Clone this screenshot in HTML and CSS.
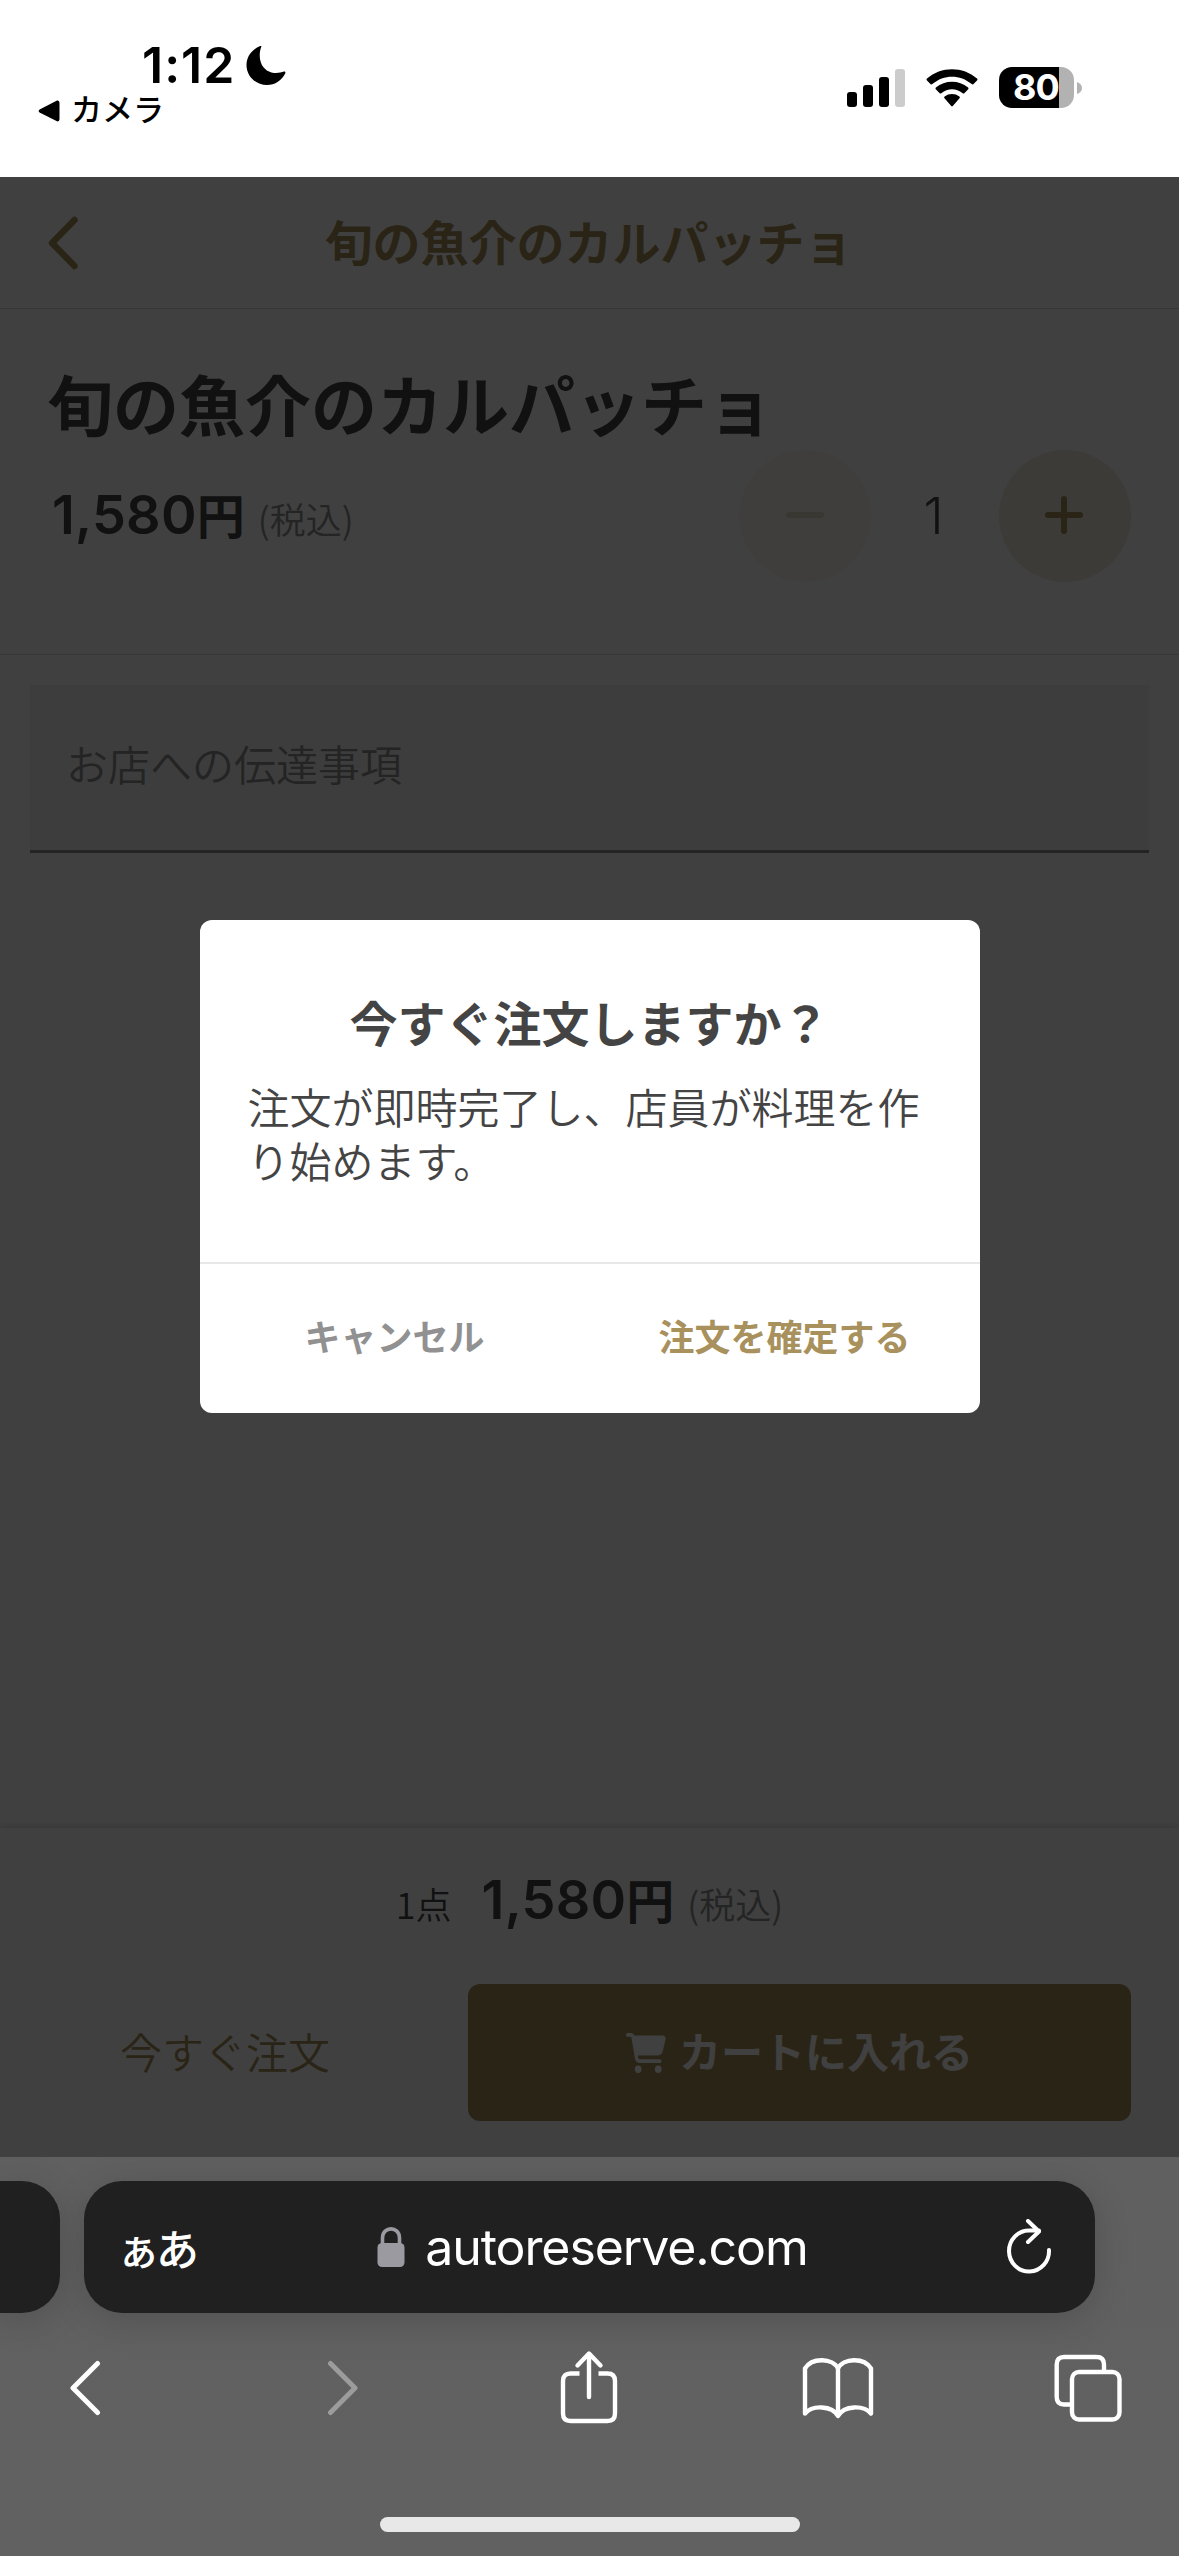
FILE: index.html
```html
<!DOCTYPE html>
<html lang="ja">
<head>
<meta charset="utf-8">
<title>旬の魚介のカルパッチョ</title>
<link rel="stylesheet" href="styles.css">
</head>
<body>
<header class="status">
  <div class="status-left">
    <div class="clock"><span>1:12</span>
      <svg class="moon" width="40" height="40" viewBox="0 0 40 40"><path d="M15.3 .8C13.600 5 13.400 10 14.200 14 15.500 21 21 26.300 28 26.900 32 27.200 35.500 26.500 38 25.600 39 25.300 39.700 26 39.300 27.200 36 34.300 29 39 21 39 9.500 39 .5 30.200 .5 19 .5 10.500 6 3.500 13.600 .3 14.800 -.2 15.700 .100 15.300 .8Z"/></svg>
    </div>
    <div class="back-app">
      <svg width="22" height="22" viewBox="0 0 22 22"><path d="M19 .6Q21.500 0 21.500 3V19Q21.500 22 19 21.300L1.600 12.600Q-.4 11 1.600 9.400Z"/></svg>
      <span>カメラ</span>
    </div>
  </div>
  <div class="status-right">
    <svg width="58" height="38" viewBox="0 0 58 38"><rect x="0" y="23" width="10" height="15" rx="3"/><rect x="16" y="16" width="10" height="22" rx="3"/><rect x="32" y="8" width="10" height="30" rx="3"/><rect x="48" y="0" width="10" height="38" rx="3" fill="#ccc"/></svg>
    <svg width="52" height="38" viewBox="0 0 52 38"><path d="M1 11.500Q0 10.500 1 9.500C15-3 37-3 51 9.500Q52 10.500 51 11.500L47.300 15.200Q46.600 15.900 45.700 15.100C34 5.300 18 5.300 6.300 15.100Q5.400 15.900 4.700 15.200Z"/><path d="M9.800 20.300Q9 19.400 9.900 18.600C19 10.800 33 10.800 42.100 18.600Q43 19.400 42.200 20.300L38.300 24.200Q37.500 24.900 36.700 24.200C30 19 22 19 15.300 24.200Q14.500 24.900 13.700 24.200Z"/><path d="M18.500 29.200Q17.600 28.300 18.600 27.500C23 24.200 29 24.200 33.400 27.500Q34.400 28.300 33.500 29.200L27 36.700Q26 37.700 25 36.700Z"/></svg>
    <div class="battery"><div class="cell"><span>80</span></div><svg width="5" height="12" viewBox="0 0 5 12"><path d="M0 0Q5 2 5 6T0 12Z" fill="#b2b2b2"/></svg></div>
  </div>
</header>

<main class="page">
  <nav class="nav">
    <svg width="30" height="54" viewBox="0 0 30 54"><path d="M26.500 4 4 27 26.500 50" fill="none" stroke="#a8915d" stroke-width="6.500" stroke-linecap="round" stroke-linejoin="round"/></svg>
    <h1>旬の魚介のカルパッチョ</h1>
  </nav>
  <section class="item">
    <h2>旬の魚介のカルパッチョ</h2>
    <div class="item-row">
      <div class="price"><span class="num">1,580</span><span class="yen">円</span><span class="tax">(税込)</span></div>
      <div class="stepper">
        <div class="round off"><svg width="40" height="40" viewBox="0 0 40 40"><path d="M4 19H36" stroke="#dfdac6" stroke-width="6" stroke-linecap="round"/></svg></div>
        <div class="count">1</div>
        <div class="round"><svg width="40" height="40" viewBox="0 0 40 40"><path d="M3 19H35M19 3V35" stroke="#a8915d" stroke-width="6" stroke-linecap="round"/></svg></div>
      </div>
    </div>
  </section>
  <div class="note">お店への伝達事項</div>
  <footer class="order">
    <div class="total"><span class="one">1</span><span class="ten">点</span><span class="num">1,580</span><span class="yen">円</span><span class="tax">(税込)</span></div>
    <div class="actions">
      <div class="now">今すぐ注文</div>
      <div class="cart">
        <svg width="40" height="40" viewBox="0 0 576 512" preserveAspectRatio="none"><path fill="#fff" d="M0 24C0 10.700 10.700 0 24 0H69.500c22 0 41.500 12.800 50.600 32h411c26.300 0 45.500 25 38.600 50.400l-41 152.300c-8.500 31.400-37 53.300-69.500 53.300H170.700l5.400 28.500c2.200 11.300 12.100 19.500 23.600 19.500H488c13.300 0 24 10.700 24 24s-10.700 24-24 24H199.700c-34.600 0-64.300-24.600-70.700-58.500L77.400 54.500c-.7-3.800-4-6.500-7.900-6.500H24C10.700 48 0 37.300 0 24zM128 464a48 48 0 1 1 96 0 48 48 0 1 1-96 0zm336-48a48 48 0 1 1 0 96 48 48 0 1 1 0-96z"/></svg>
        <span>カートに入れる</span>
      </div>
    </div>
  </footer>
  <div class="overlay">
    <div class="dialog">
      <div class="dialog-body">
        <h3>今すぐ注文しますか？</h3>
        <p>注文が即時完了し、店員が料理を作り始めます。</p>
      </div>
      <div class="dialog-actions"><div class="cancel">キャンセル</div><div class="confirm">注文を確定する</div></div>
    </div>
  </div>
</main>

<footer class="browser">
  <div class="tabs-row">
    <div class="prev-tab"></div>
    <div class="address">
      <div class="kana">ぁあ</div>
      <div class="url">
        <svg width="28" height="40" viewBox="0 0 28 40"><rect x=".5" y="16" width="27" height="24" rx="4.500" fill="#9b9aa1"/><path d="M5.500 18V11C5.500 -1.200 22.500 -1.200 22.500 11V18" fill="none" stroke="#9b9aa1" stroke-width="3.600"/></svg>
        <span>autoreserve.com</span>
      </div>
      <svg width="46" height="56" viewBox="0 0 46 56"><path d="M43 31A20 20.500 0 1 1 23 11.500 H33M22 2 33 12.500 22 23" fill="none" stroke="#fff" stroke-width="4" stroke-linecap="round" stroke-linejoin="round"/></svg>
    </div>
  </div>
  <div class="tools">
    <div class="tool"><svg width="32" height="56" viewBox="0 0 32 56"><path d="M28.500 3.500 4 28 28.500 52.500" fill="none" stroke="#fff" stroke-width="5" stroke-linecap="round" stroke-linejoin="round"/></svg></div>
    <div class="tool forward"><svg width="32" height="56" viewBox="0 0 32 56"><path d="M3.500 3.500 28 28 3.500 52.500" fill="none" stroke="#9c9c9c" stroke-width="5" stroke-linecap="round" stroke-linejoin="round"/></svg></div>
    <div class="tool share"><svg width="58" height="74" viewBox="0 0 58 74"><g fill="none" stroke="#fff" stroke-width="4.400" stroke-linecap="round" stroke-linejoin="round"><path stroke-linecap="butt" d="M19.500 23.500H10.500Q3 23.500 3 31V63.500Q3 71 10.500 71H47.500Q55 71 55 63.500V31Q55 23.500 47.500 23.500H38.500"/><path d="M29 47V4M17.500 15.500 29 3.500 40.500 15.500"/></g></svg></div>
    <div class="tool book"><svg width="72" height="62" viewBox="0 0 72 62"><path d="M36 11.500C31 1 10 0 3 11.500V56.500C10 48 30 48 36 59 42 48 62 48 69 56.500V11.500C62 0 41 1 36 11.500V58" fill="none" stroke="#fff" stroke-width="4.400" stroke-linecap="round" stroke-linejoin="round"/></svg></div>
    <div class="tool"><svg width="68" height="68" viewBox="0 0 68 68"><g fill="none" stroke="#fff" stroke-width="4.400"><rect x="18" y="18" width="47.500" height="47.500" rx="7"/><path d="M18 50.500H10Q2.700 50.500 2.700 43V10.500Q2.700 3 10 3H42.500Q50 3 50 10.500V18"/></g></svg></div>
  </div>
  <div class="home"></div>
</footer>
</body>
</html>
```
FILE: styles.css
```css
* { box-sizing: border-box; margin: 0; padding: 0; }
body {
  width: 1179px; height: 2556px; overflow: hidden; background: #fff; color: #444;
  font-family: "Noto Sans CJK JP", sans-serif; display: flex; flex-direction: column;
}
svg { display: block; flex: none; }
h1, h2, h3 { font-weight: 700; }

.status { height: 177px; flex: none; display: flex; justify-content: space-between; color: #000; }
.status-left { padding: 35px 0 0 38px; }
.clock { display: flex; align-items: flex-start; gap: 11px; height: 57px; padding-left: 104px; font: 600 50px/60px Inter, sans-serif; letter-spacing: 1px; }
.moon { margin-top: 11px; }
.back-app { display: flex; align-items: center; gap: 11px; height: 32px; font-size: 31px; font-weight: 500; line-height: 32px; }
.back-app svg { margin-top: 5px; }
.status-right { display: flex; align-items: center; gap: 21px; height: 43px; margin: 66px 97px 0 0; }
.battery { display: flex; align-items: center; gap: 3px; }
.cell { width: 75px; height: 41px; border-radius: 13px; background: linear-gradient(90deg, #000 60px, #b2b2b2 60px); color: #fff; font: 700 36px/41px Inter, sans-serif; padding-left: 14px; letter-spacing: -1px; }

.page { position: relative; height: 1980px; flex: none; display: flex; flex-direction: column; background: #fff; overflow: hidden; }
.nav { height: 132px; border-bottom: 1px solid #dcdcdc; display: grid; grid-template-columns: 100px 1fr 100px; align-items: center; color: #a8915d; }
.nav svg { margin-left: 48px; }
.nav h1 { font-size: 48px; line-height: 60px; text-align: center; padding-bottom: 6px; margin-left: -2px; }
.item { height: 346px; border-bottom: 1px solid #dcdcdc; padding: 53px 48px 0; }
.item h2 { font-size: 66px; line-height: 80px; margin-left: -1px; }
.item-row { display: flex; justify-content: space-between; height: 132px; margin-top: 8px; }
.price, .total { display: flex; align-items: baseline; line-height: 70px; }
.price { padding: 28px 0 0 4px; }
.num { font-family: Inter, sans-serif; font-size: 54px; font-weight: 600; letter-spacing: .2px; }
.yen { font-size: 48px; font-weight: 700; }
.tax { font-size: 36px; font-weight: 350; color: #8e8e8e; margin-left: 13px; }
.stepper { display: flex; align-items: center; }
.round { width: 132px; height: 132px; border-radius: 50%; background: #efe9e0; display: grid; place-items: center; }
.round.off { background: #f9f8f0; }
.count { width: 128px; text-align: center; padding-right: 3px; font: 300 51px/60px Inter, sans-serif; }
.note { height: 168px; margin: 30px 30px 0; padding: 0 36px; background: #f2f2f2; border-bottom: 3px solid #8e8e8e; color: #8e8e8e; font-size: 42px; font-weight: 350; line-height: 155px; }
.order { margin-top: auto; height: 329px; padding: 35px 48px 36px; box-shadow: 0 0 9px rgba(0,0,0,.2); display: flex; flex-direction: column; justify-content: space-between; }
.total { justify-content: center; }
.one, .ten { font-size: 36px; font-weight: 350; }
.ten { margin-right: 30px; }
.actions { display: flex; height: 137px; }
.now { width: 420px; padding-right: 66px; text-align: center; color: #a8915d; font-size: 42px; font-weight: 350; line-height: 133px; }
.cart { flex: 1; display: flex; justify-content: center; align-items: center; gap: 13px; background: #a8915d; color: #fff; border-radius: 12px; font-size: 42px; font-weight: 700; line-height: 60px; }
.cart span { padding-bottom: 5px; }
.overlay { position: absolute; inset: 0; background: rgba(0,0,0,.75); }
.dialog { width: 780px; height: 493px; margin: 743px auto 0; background: #fff; border-radius: 12px; display: flex; flex-direction: column; }
.dialog-body { height: 342px; padding: 71px 48px 0; }
.dialog-body h3 { font-size: 48px; line-height: 60px; text-align: center; }
.dialog-body p { margin-top: 28px; font-size: 42px; line-height: 54px; font-weight: 350; width: 690px; }
.dialog-actions { flex: 1; display: grid; grid-template-columns: 1fr 1fr; border-top: 2px solid #e8e8e8; text-align: center; font-size: 36px; font-weight: 700; line-height: 142px; }
.cancel { color: #919191; }
.confirm { color: #a8915d; }

.browser { height: 399px; flex: none; background: linear-gradient(#606060, #616161); display: flex; flex-direction: column; overflow: hidden; }
.tabs-row { display: flex; gap: 24px; padding-top: 24px; }
.prev-tab { width: 60px; height: 132px; border-radius: 0 38px 38px 0; background: #202020; box-shadow: 0 6px 36px rgba(0,0,0,.16); }
.address { width: 1011px; height: 132px; border-radius: 38px; background: #202020; box-shadow: 0 6px 36px rgba(0,0,0,.16); color: #fff; display: flex; justify-content: space-between; align-items: center; padding: 0 43px 0 33px; }
.kana { font-size: 43px; font-weight: 500; line-height: 60px; letter-spacing: -4px; width: 80px; }
.url { display: flex; align-items: center; gap: 20px; margin-right: 18px; font: 400 50px/60px Inter, sans-serif; letter-spacing: -1.100px; }
.tools { display: flex; justify-content: space-between; align-items: center; padding: 0 57px 0 51px; height: 74px; margin-top: 38px; }
.tool { width: 68px; display: flex; justify-content: center; }
.forward { padding-left: 15px; }
.share { padding: 0 0 2px 4px; }
.book { padding-left: 2px; }
.home { width: 420px; height: 15px; border-radius: 8px; background: #e8e8e8; margin: 92px auto 0; }
```
